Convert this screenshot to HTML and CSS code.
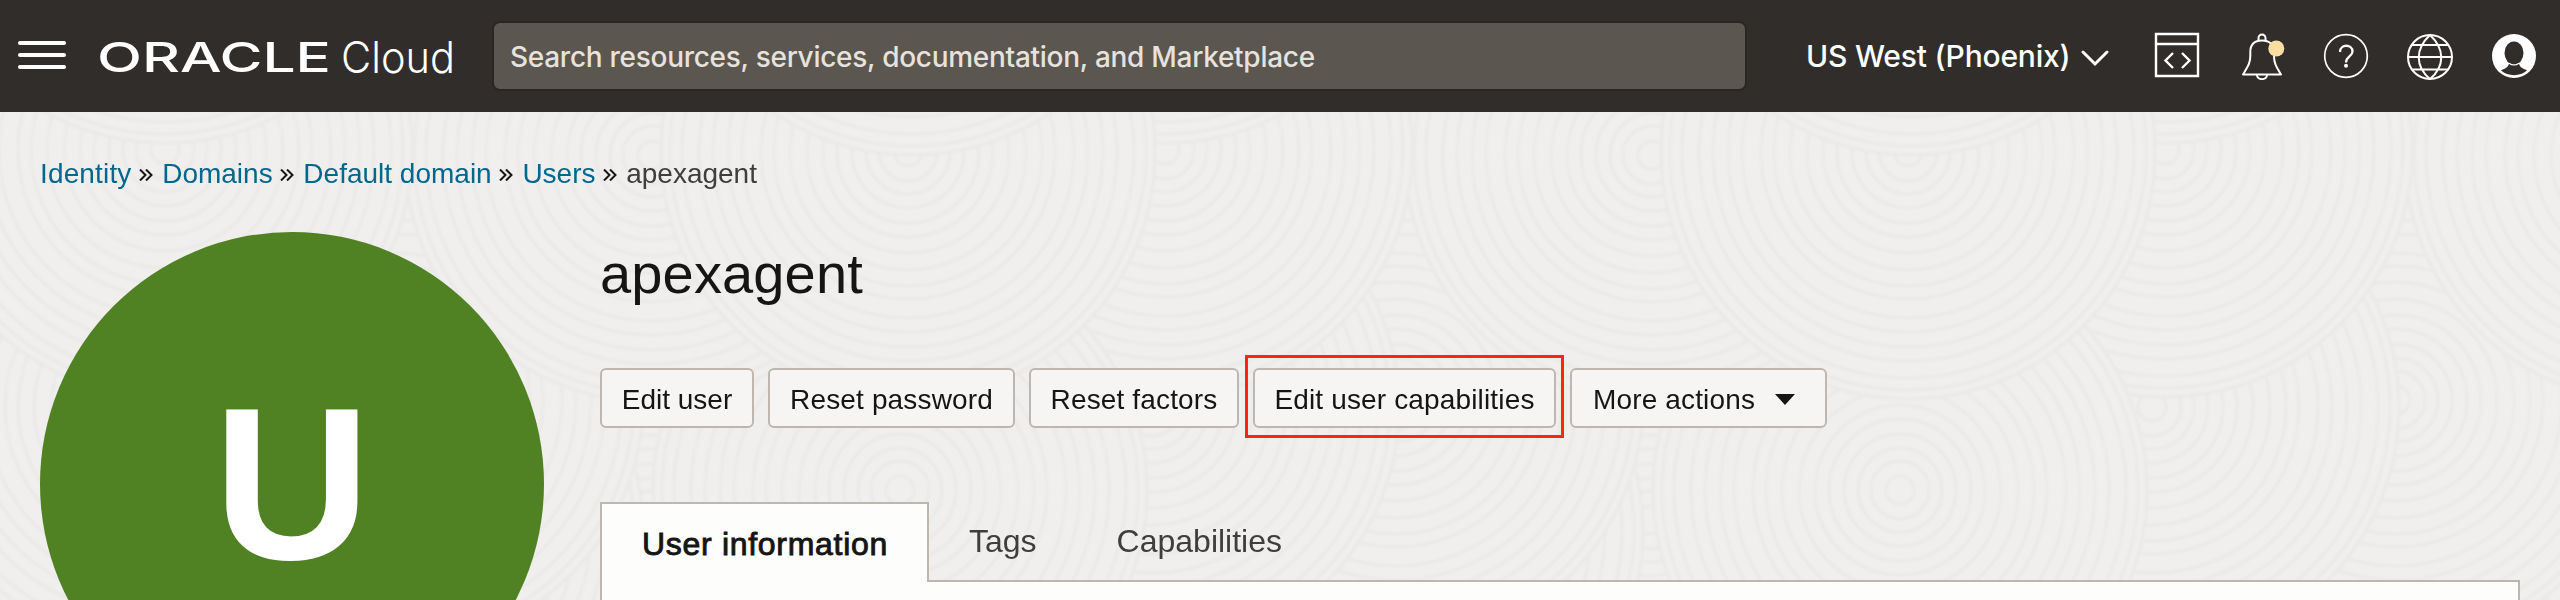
FILE: index.html
```html
<!DOCTYPE html>
<html lang="en">
<head>
<meta charset="utf-8">
<title>apexagent - Oracle Cloud</title>
<link rel="stylesheet" href="styles.css">
</head>
<body>
<header class="topbar">
  <button class="menu" aria-label="Menu"><span></span><span></span><span></span></button>
  <svg class="brand" width="360" height="64" viewBox="0 -8 360 64">
    <text class="brand-oracle" x="-3" y="39" textLength="234" lengthAdjust="spacingAndGlyphs">ORACLE</text>
    <text class="brand-cloud" x="241" y="40" textLength="114" lengthAdjust="spacingAndGlyphs">Cloud</text>
  </svg>
  <div class="search">Search resources, services, documentation, and Marketplace</div>
  <div class="region">US West (Phoenix)
    <svg width="28" height="18" viewBox="0 0 28 18"><path d="M2 3l12 12L26 3" fill="none" stroke="#fff" stroke-width="3" stroke-linecap="round"/></svg>
  </div>
  <nav class="tools">
    <svg width="48" height="48" viewBox="0 0 48 48" fill="none" stroke="#fff">
      <path d="M2 2h42v42H2zM2 12h42" stroke-width="2.400"/>
      <path d="M19 21l-7.500 7.500 7.500 7.500M28 21l7.500 7.500-7.500 7.500" stroke-width="2.400"/>
    </svg>
    <svg width="48" height="48" viewBox="0 0 48 48" fill="none" stroke="#fff" stroke-width="2">
      <path d="M5 42.500C10 34 12.300 31 12.300 24V20C12.300 12 17 8.400 24 8.400S36 12 36 20V24C36 31 38 34 43 42.500Z" stroke-linejoin="round"/>
      <path d="M20.500 8V6a3.500 3.500 0 0 1 7 0v2M19 43c.5 5.500 9.500 5.500 10 0"/>
      <circle cx="38.300" cy="16.500" r="8" fill="#f8dfa1" stroke="none"/>
    </svg>
    <svg width="48" height="48" viewBox="0 0 48 48" fill="none" stroke="#fff">
      <circle cx="24" cy="24" r="21.300" stroke-width="1.700"/>
      <path d="M18 20C18 11.500 30.500 12 30.500 19.500C30.500 24.500 24 24.500 24 30.500" stroke-width="2.300"/>
      <circle cx="24" cy="33.700" r="2" fill="#fff" stroke="none"/>
    </svg>
    <svg width="48" height="48" viewBox="0 0 48 48" fill="none" stroke="#fff" stroke-width="2">
      <circle cx="24" cy="25" r="22"/>
      <path d="M2 25h44M6 13h36M6 37.500h36M24 3C9 17 9 34 24 47M24 3C39 17 39 34 24 47"/>
    </svg>
    <svg width="48" height="48" viewBox="0 0 48 48">
      <circle cx="24" cy="24" r="22" fill="#fff"/>
      <ellipse cx="24" cy="21" rx="9.500" ry="11.500" fill="#312d2a"/>
      <path d="M11 38.500C14 36.500 18 36.500 19.200 31Q24 34.500 28.800 31C30 36.500 34 36.500 37 38.500A20.500 20.500 0 0 1 11 38.500Z" fill="#312d2a"/>
      <path d="M19 31.200Q24 34.800 29 31.200" fill="none" stroke="#fff" stroke-width="1.200"/>
    </svg>
  </nav>
</header>

<main class="page">
  <svg class="texture" width="2560" height="488" viewBox="0 112 2560 488" aria-hidden="true">
    <defs>
      <g id="disc" fill="none" stroke="#ebeae9" stroke-width="3.500">
        <circle r="247" fill="#f0efee"/><circle r="238"/><circle r="226"/><circle r="209"/><circle r="195"/><circle r="180"/><circle r="166"/><circle r="147"/><circle r="134"/><circle r="118"/><circle r="101"/><circle r="85"/><circle r="71"/><circle r="56"/><circle r="42"/><circle r="29"/><circle r="14"/>
      </g>
      <g id="tile">
        <use href="#disc" x="880" y="640"/>
        <use href="#disc" x="650" y="520"/>
        <use href="#disc" x="396" y="530"/>
        <use href="#disc" x="900" y="490"/>
        <use href="#disc" x="396" y="400"/>
        <use href="#disc" x="152" y="407"/>
        <use href="#disc" x="652" y="155"/>
        <use href="#disc" x="165" y="150"/>
        <use href="#disc" x="908" y="152"/>
        <use href="#disc" x="165" y="-104"/>
        <use href="#disc" x="912" y="-92"/>
      </g>
    </defs>
    <g class="rings">
      <use href="#tile" x="-1000"/><use href="#tile" x="2000"/><use href="#tile" x="1000"/><use href="#tile"/>
    </g>
  </svg>

  <nav class="crumbs">
    <a class="wide">Identity</a><svg class="sep" viewBox="0 0 14 12"><path d="M1 .5L6.500 6L1 11.500M7 .5L12.500 6L7 11.500"/></svg>
    <a>Domains</a><svg class="sep" viewBox="0 0 14 12"><path d="M1 .5L6.500 6L1 11.500M7 .5L12.500 6L7 11.500"/></svg>
    <a>Default domain</a><svg class="sep" viewBox="0 0 14 12"><path d="M1 .5L6.500 6L1 11.500M7 .5L12.500 6L7 11.500"/></svg>
    <a>Users</a><svg class="sep" viewBox="0 0 14 12"><path d="M1 .5L6.500 6L1 11.500M7 .5L12.500 6L7 11.500"/></svg>
    <span>apexagent</span>
  </nav>

  <div class="content">
    <div class="avatar">U</div>
    <section class="detail">
      <h1>apexagent</h1>
      <div class="actions">
        <button class="btn edit">Edit user</button>
        <button class="btn password">Reset password</button>
        <button class="btn factors">Reset factors</button>
        <button class="btn marked">Edit user capabilities</button>
        <button class="btn more">More actions <svg width="20" height="11" viewBox="0 0 20 11"><path d="M0 0h20L10 11z" fill="#161513"/></svg></button>
      </div>
      <div class="tabs">
        <div class="tab active">User information</div>
        <div class="tab">Tags</div>
        <div class="tab">Capabilities</div>
      </div>
      <div class="panel"></div>
    </section>
  </div>
</main>
</body>
</html>
```
FILE: styles.css
```css
* { box-sizing: border-box; }
html, body { margin: 0; height: 600px; overflow: hidden; }
body {
  background: #f0efee;
  color: #161513;
  font-family: "Liberation Sans", Arial, sans-serif;
  font-size: 28px;
}
button { font: inherit; color: inherit; margin: 0; }

.topbar {
  display: flex;
  align-items: center;
  height: 112px;
  padding-left: 18px;
  background: #312d2a;
  color: #fff;
}
.menu {
  display: flex;
  flex-direction: column;
  gap: 8px;
  width: 48px;
  padding: 0;
  border: 0;
  background: none;
  margin-top: -2px;
}
.menu span { height: 4px; border-radius: 2px; background: #fff; }
.brand { margin-left: 34px; margin-right: 32px; margin-top: 2px; fill: #fff; flex: none; overflow: visible; }
.brand-oracle { font: 500 41px Inter, sans-serif; }
.brand-cloud { font: 300 43px Inter, sans-serif; }
.search {
  width: 1255px;
  height: 70px;
  padding: 1px 16px 0;
  border: 2px solid #2a2623;
  border-radius: 8px;
  background: #5b564f;
  color: #e6e2dd;
  font: 450 28px/66px Inter, sans-serif;
  letter-spacing: -.28px;
  white-space: nowrap;
}
.region {
  display: flex;
  align-items: center;
  gap: 11px;
  width: 303px;
  margin-left: 59px;
  font: 500 30px/40px Inter, sans-serif;
  letter-spacing: -.2px;
  white-space: nowrap;
}
.region svg { margin-top: 3px; flex: none; }
.tools { display: flex; gap: 36px; margin-left: 45px; }
.tools svg { flex: none; }

.page { position: relative; height: 488px; padding-top: 46px; overflow: hidden; }
.texture { position: absolute; inset: 0; z-index: -1; }
.rings { filter: blur(1.2px); }

.crumbs {
  display: flex;
  align-items: center;
  height: 32px;
  padding-left: 40px;
  white-space: nowrap;
}
.crumbs a { color: #00688c; }
.crumbs a.wide { letter-spacing: .15px; }
.crumbs span { color: #403e3c; }
.sep { width: 14px; height: 12px; margin: 1px 9.200px 0 7.500px; fill: none; stroke: #161513; stroke-width: 2; }

.content { display: grid; grid-template-columns: 504px 1920px; column-gap: 56px; padding: 42px 0 0 40px; }
.avatar {
  height: 504px;
  border-radius: 50%;
  background: #508223;
  color: #fff;
  font-size: 218px;
  font-weight: 700;
  line-height: 503px;
  text-align: center;
}
h1 { margin: 0; padding-top: 10px; font-size: 56px; font-weight: 400; line-height: 64px; letter-spacing: .15px; }
.actions { display: flex; gap: 14px; margin-top: 62px; }
.btn {
  position: relative;
  display: flex;
  align-items: center;
  justify-content: center;
  height: 60px;
  padding: 3px 0 0;
  border: 2px solid #bdb7af;
  border-radius: 6px;
  background: #f7f5f3;
  line-height: 32px;
  letter-spacing: .15px;
  white-space: nowrap;
}
.edit { width: 154px; letter-spacing: 0; }
.password { width: 247px; }
.factors { width: 210px; }
.marked { width: 303px; }
.marked::after { content: ""; position: absolute; inset: -15px -10px -12px -10px; border: 3px solid #ff2600; }
.more { width: 257px; gap: 20px; justify-content: flex-start; padding-left: 21px; }

.tabs { display: flex; height: 78px; margin-top: 74px; font-size: 32px; line-height: 36px; }
.tab { padding: 21px 40px 0; color: #403e3c; }
.tab.active {
  width: 329px;
  height: 80px;
  padding: 22px 0 0 40px;
  position: relative;
  z-index: 1;
  border: 2px solid #bdb7af;
  border-bottom: 0;
  background: #fdfdfb;
  color: #161513;
  letter-spacing: .7px;
  -webkit-text-stroke: .9px #161513;
}
.panel { height: 20px; border: 2px solid #bdb7af; border-bottom: 0; background: #fdfdfb; }
```
